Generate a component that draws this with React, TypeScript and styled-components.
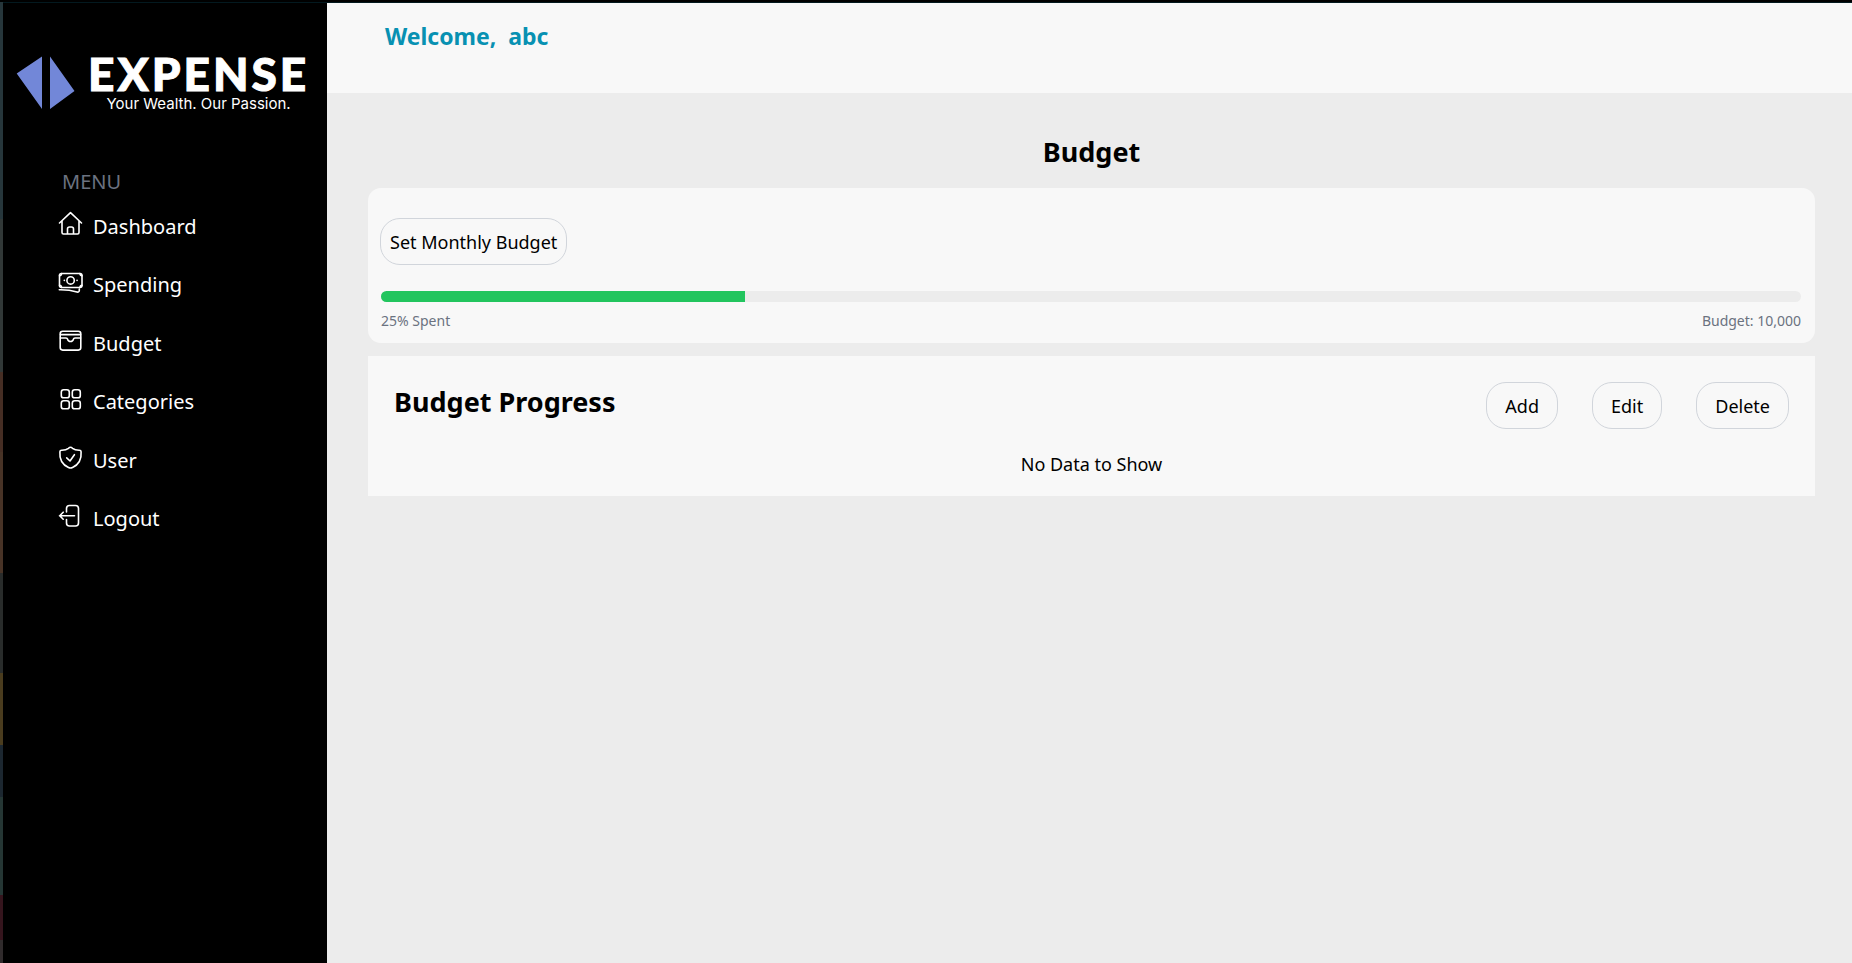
import React from 'react';
import styled, { createGlobalStyle } from 'styled-components';

const GlobalStyle = createGlobalStyle`
  *, *::before, *::after { box-sizing: border-box; }
  body {
    margin: 0;
    background: #ececec;
    color: #000;
    font-family: "Noto Sans", sans-serif;
    font-size: 18px;
    line-height: 26px;
  }
  h1, h2, p, ul { margin: 0; padding: 0; }
  button { font: inherit; color: inherit; cursor: pointer; }
`;

const Shell = styled.div`
  display: flex;
  min-height: 100vh;
  border-top: 2px solid #000;
`;

const EdgeStrip = styled.div`
  flex: none;
  width: 3px;
  background: linear-gradient(
    #26363b 0 217px,
    #313837 217px 370px,
    #462e24 370px 450px,
    #483326 450px 571px,
    #292c2b 571px 671px,
    #4a3c1e 671px 743px,
    #1c2730 743px 795px,
    #253634 795px 893px,
    #35151d 893px 938px,
    #302b2c 938px
  );
`;

const Sidebar = styled.aside`
  flex: none;
  width: 324px;
  padding: 52px 12px 24px 13px;
  background: #000;
  color: #fff;
  border-top: 1px solid #03191f;
`;

const Brand = styled.a`
  display: flex;
  gap: 12px;
  color: #fff;
  text-decoration: none;
`;

const BrandText = styled.span`
  display: flex;
  flex-direction: column;
  align-items: center;
  gap: 2px;
`;

const BrandName = styled.span`
  font-family: Lato, sans-serif;
  font-weight: 900;
  font-size: 46px;
  line-height: 38px;
  letter-spacing: 3px;
  -webkit-text-stroke: 1px #fff;
`;

const Tagline = styled.span`
  font-family: Inter, sans-serif;
  font-size: 15px;
  line-height: 18px;
`;

const MenuLabel = styled.p`
  margin: 55px 0 15px 46px;
  color: #6b7280;
  font-size: 20px;
  line-height: 27px;
`;

const NavList = styled.ul`
  display: flex;
  flex-direction: column;
  justify-content: space-between;
  height: 322px;
  margin-left: 41px;
  list-style: none;
`;

const NavLink = styled.a`
  display: flex;
  align-items: flex-end;
  gap: 10px;
  height: 30px;
  color: #fff;
  font-size: 20px;
  line-height: 27px;
  text-decoration: none;
`;

const NavIcon = styled.svg`
  align-self: flex-start;
  width: 26px;
  height: 26px;
  fill: none;
  stroke: currentColor;
  stroke-width: 1.6;
  stroke-linecap: round;
  stroke-linejoin: round;
`;

const Page = styled.div`
  flex: 1;
  min-width: 0;
  border-top: 1px solid #03191f;
`;

const Header = styled.header`
  height: 90px;
  padding: 18px 58px;
  background: #f8f8f8;
`;

const Welcome = styled.p`
  color: #0891b2;
  font-size: 23px;
  line-height: 31px;
  font-weight: 700;
  white-space: pre;
`;

const Content = styled.main`
  padding: 40px 37px 40px 41px;
`;

const Title = styled.h1`
  margin-bottom: 17px;
  font-size: 27px;
  line-height: 38px;
  text-align: center;
`;

const Card = styled.section<{ $rounded?: boolean }>`
  margin-bottom: 13px;
  padding: ${(p) => (p.$rounded ? '30px 14px 10px 12px' : '26px 26px 19px')};
  border-radius: ${(p) => (p.$rounded ? '13px' : '0')};
  background: #f8f8f8;
`;

const PillButton = styled.button<{ $compact?: boolean }>`
  height: 47px;
  padding: 0 ${(p) => (p.$compact ? '9px' : '18px')};
  border: 1px solid #d1d5db;
  border-radius: 20px;
  background: transparent;
`;

const Track = styled.div`
  height: 11px;
  margin: 26px 0 7px 1px;
  border-radius: 6px;
  background: #ececec;
  overflow: hidden;
`;

const Fill = styled.div`
  height: 100%;
  background: #22c55e;
`;

const Legend = styled.div`
  display: flex;
  justify-content: space-between;
  margin-left: 1px;
  color: #6b7280;
  font-size: 14px;
  line-height: 24px;
`;

const CardHead = styled.div`
  display: flex;
  justify-content: space-between;
  align-items: flex-start;
`;

const CardTitle = styled.h2`
  font-size: 27px;
  line-height: 40px;
`;

const Actions = styled.div`
  display: flex;
  gap: 34px;
`;

const Empty = styled.p`
  margin-top: 22px;
  text-align: center;
`;

const items = [
  {
    label: 'Dashboard',
    icon: <path d="M2.5 13 13.5 2.7 24.5 13M5 11V22.500q0 1.500 1.500 1.500H20.500q1.500 0 1.500-1.500V11M10.500 24V19q0-2 2-2h2q2 0 2 2V24" />,
  },
  {
    label: 'Spending',
    icon: (
      <>
        <rect x="2.500" y="5.500" width="22.500" height="14" rx="2" />
        <circle cx="13.600" cy="12.400" r="3.700" />
        <path d="M7.300 12.400h.1M20 12.400h.1M2.500 7.800q1.900 0 2.100-2.300M25 7.800q-1.900 0-2.100-2.300M2.500 17.200q1.900 0 2.100 2.300M25 17.200q-1.900 0-2.100 2.300M2.300 21.800Q12 21.600 20 24q2 .5 2.300-1.300V21" />
      </>
    ),
  },
  {
    label: 'Budget',
    icon: (
      <>
        <rect x="3.200" y="4.300" width="20.600" height="18.800" rx="2.500" />
        <path d="M3.500 7.600h20M3.500 11H9q1.300 0 1.600 1.300a3 3 0 0 0 5.800 0Q16.700 11 18 11h5.500" />
      </>
    ),
  },
  {
    label: 'Categories',
    icon: (
      <>
        <rect x="4.300" y="4.800" width="8" height="8" rx="2.400" />
        <rect x="15.300" y="4.800" width="8" height="8" rx="2.400" />
        <rect x="4.300" y="15.800" width="8" height="8" rx="2.400" />
        <rect x="15.300" y="15.800" width="8" height="8" rx="2.400" />
      </>
    ),
  },
  {
    label: 'User',
    icon: (
      <path d="M13.500 3.300q1 0 2 1 2.500 2 7 1.900 1.500 0 1.600 1.500Q25 19 15.500 23.500q-2 1-4 0Q2 19 2.900 7.700 3 6.200 4.500 6.200q4.500.1 7-1.900 1-1 2-1M9.700 13.900 13 17l4.400-6.300" />
    ),
  },
  {
    label: 'Logout',
    icon: <path d="M9.500 10V6.500q0-3 3-3h6q3 0 3 3v14.500q0 3-3 3h-6q-3 0-3-3V17.500M17.500 13.700h-15M6.200 10.200 2.700 13.700l3.500 3.500" />,
  },
];

export default function App() {
  const spent = 25.6;
  return (
    <>
      <GlobalStyle />
      <Shell>
        <EdgeStrip />
        <Sidebar>
          <Brand href="#">
            <svg width="60" height="56" viewBox="0 0 60 56" fill="#7287d8" aria-hidden="true">
              <path d="M26 1.500V54L.700 18.500ZM34 1.500 58.500 36 34 54Z" />
            </svg>
            <BrandText>
              <BrandName>EXPENSE</BrandName>
              <Tagline>Your Wealth. Our Passion.</Tagline>
            </BrandText>
          </Brand>
          <nav>
            <MenuLabel>MENU</MenuLabel>
            <NavList>
              {items.map((item) => (
                <li key={item.label}>
                  <NavLink href="#">
                    <NavIcon viewBox="0 0 26 26" aria-hidden="true">{item.icon}</NavIcon>
                    {item.label}
                  </NavLink>
                </li>
              ))}
            </NavList>
          </nav>
        </Sidebar>
        <Page>
          <Header>
            <Welcome>{'Welcome,  abc'}</Welcome>
          </Header>
          <Content>
            <Title>Budget</Title>
            <Card $rounded>
              <PillButton type="button" $compact>Set Monthly Budget</PillButton>
              <Track role="progressbar" aria-label="Budget spent" aria-valuenow={25}>
                <Fill style={{ width: `${spent}%` }} />
              </Track>
              <Legend>
                <span>25% Spent</span>
                <span>Budget: 10,000</span>
              </Legend>
            </Card>
            <Card>
              <CardHead>
                <CardTitle>Budget Progress</CardTitle>
                <Actions>
                  <PillButton type="button">Add</PillButton>
                  <PillButton type="button">Edit</PillButton>
                  <PillButton type="button">Delete</PillButton>
                </Actions>
              </CardHead>
              <Empty>No Data to Show</Empty>
            </Card>
          </Content>
        </Page>
      </Shell>
    </>
  );
}
